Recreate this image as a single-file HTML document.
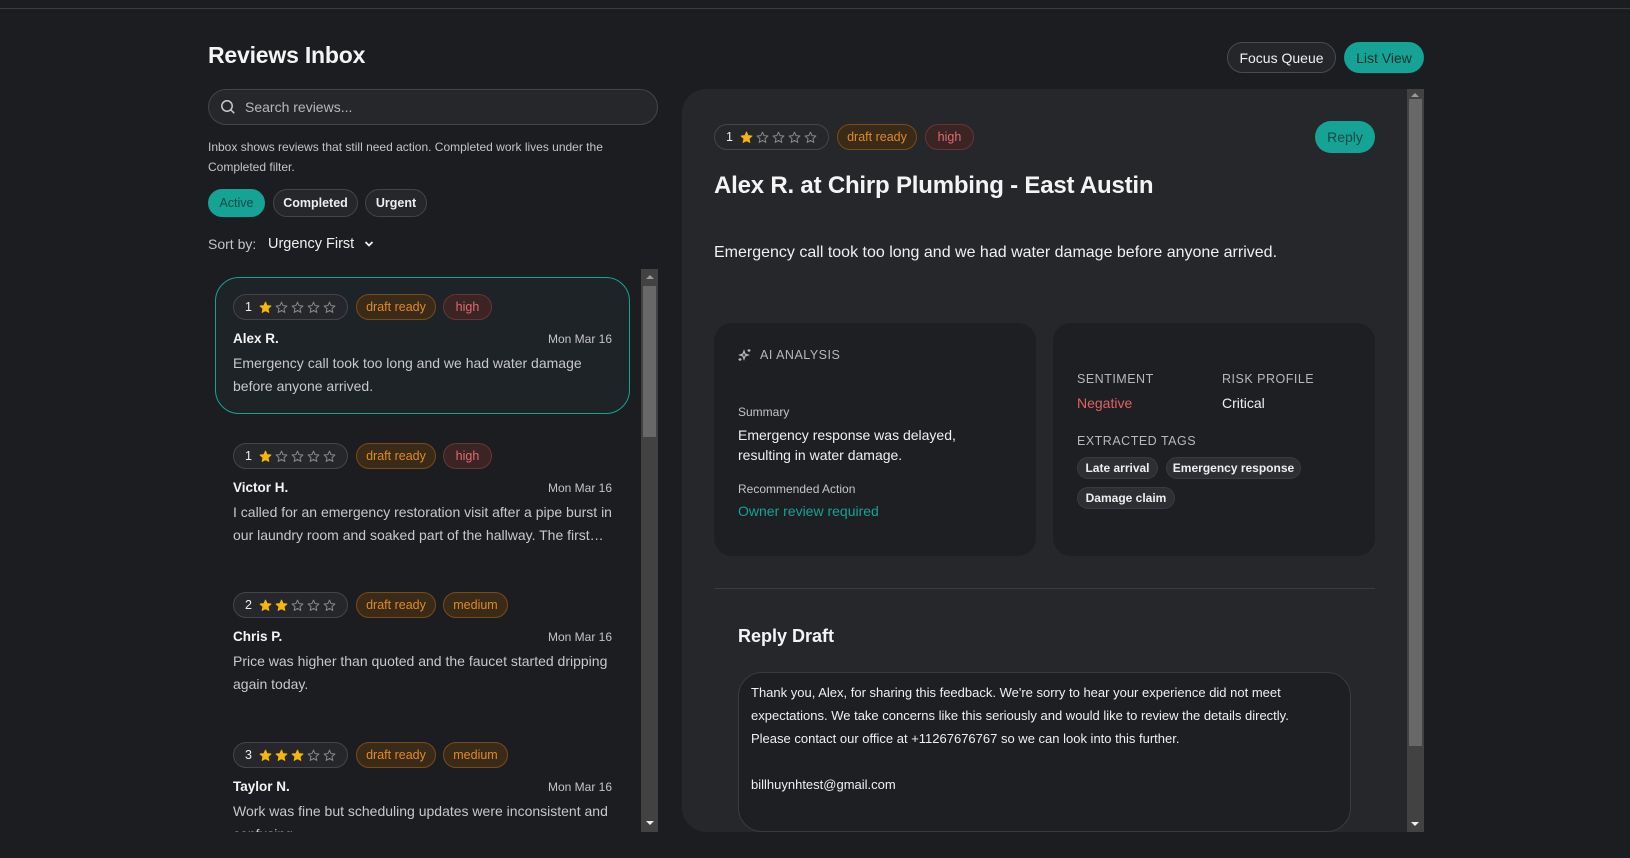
<!DOCTYPE html>
<html><head><meta charset="utf-8"><style>
*{box-sizing:border-box;margin:0;padding:0}
html,body{width:1630px;height:858px;overflow:hidden;background:#1c1d20;font-family:"Liberation Sans",Arial,sans-serif;color:#e8e8ea}
.a{position:absolute}
.topline{left:0;top:8px;width:1630px;height:1px;background:#3a3b3f}
h1{position:absolute;left:208px;top:42px;font-size:23px;font-weight:700;color:#f4f4f5;letter-spacing:-0.2px}
.btn{position:absolute;border-radius:16px;font-size:14px;display:flex;align-items:center;justify-content:center}
.search{left:208px;top:89px;width:450px;height:36px;border:1px solid #44454a;border-radius:18px;background:#26272b;font-size:14px;color:#b8b8bc;padding-left:36px;line-height:34px}
.help{left:208px;top:137px;width:420px;font-size:12px;line-height:20px;color:#c4c4c8}
.chip{position:absolute;top:189px;height:28px;border-radius:14px;font-size:12.5px;display:flex;align-items:center;justify-content:center;border:1px solid #44454a;background:#26272b;color:#eee;font-weight:700}
.pill{position:absolute;height:26px;border-radius:13px;font-size:12.5px;display:flex;align-items:center}
.rate{border:1px solid #44454a;background:#26272b;padding-left:11px;color:#eee;width:115px}
.rate span{margin-right:7px}
.dr{background:#3a2a18;border:1px solid #7a4a18;color:#e08a24;width:80px;justify-content:center}
.hi{background:#3a2424;border:1px solid #6a3434;color:#e26b6b;width:49px;justify-content:center}
.med{background:#3a2a18;border:1px solid #7a4a18;color:#e08a24;width:65px;justify-content:center}
.name{font-size:13.5px;font-weight:700;color:#f4f4f5}
.date{font-size:12px;color:#c4c4c8;text-align:right;width:120px}
.txt{font-size:14px;line-height:23px;color:#c8c8cc;width:380px}
.sb{background:#424242}
.th{background:#686868}
.up{width:0;height:0;border-left:4px solid transparent;border-right:4px solid transparent;border-bottom:4px solid #9a9a9a}
.dn{width:0;height:0;border-left:4px solid transparent;border-right:4px solid transparent;border-top:4px solid #eee}
.lbl{font-size:12.5px;letter-spacing:0.5px;color:#b8b8bc}
.tag{position:absolute;height:22px;border-radius:11px;background:#2e2f33;border:1px solid #3a3b3f;font-size:12px;color:#eee;font-weight:700;display:flex;align-items:center;justify-content:center}
</style></head><body>
<div class="a topline"></div>
<h1>Reviews Inbox</h1>
<div class="btn" style="left:1227px;top:42px;width:109px;height:31px;border:1px solid #4a4b50;background:#25262a;color:#f0f0f0">Focus Queue</div>
<div class="btn" style="left:1344px;top:42px;width:80px;height:31px;background:#14a394;color:#10302c">List View</div>

<div class="a search">Search reviews...</div>
<svg class="a" style="left:220px;top:99px" width="16" height="16" viewBox="0 0 16 16"><circle cx="7" cy="7" r="5.2" fill="none" stroke="#c8c8cc" stroke-width="1.5"/><path d="M11 11l3.2 3.2" stroke="#c8c8cc" stroke-width="1.5"/></svg>
<div class="a help">Inbox shows reviews that still need action. Completed work lives under the Completed filter.</div>
<div class="chip" style="left:208px;width:57px;background:#14a394;border-color:#14a394;color:#134a44;font-weight:400">Active</div>
<div class="chip" style="left:273px;width:85px">Completed</div>
<div class="chip" style="left:365px;width:62px">Urgent</div>
<div class="a" style="left:208px;top:236px;font-size:14px;color:#c4c4c8">Sort by:</div>
<div class="a" style="left:268px;top:236px;font-size:14.5px;color:#f0f0f0">Urgency First</div>
<svg class="a" style="left:364px;top:240px" width="10" height="8" viewBox="0 0 10 8"><path d="M1.5 2l3.5 3.5L8.5 2" fill="none" stroke="#f0f0f0" stroke-width="1.8"/></svg>

<div class="a" style="left:208px;top:269px;width:434px;height:563px;overflow:hidden">
  <div class="a" style="left:7px;top:8px;width:415px;height:137px;border:1.5px solid #14a394;border-radius:24px;background:#1d2326"></div>
</div>
<div class="a sb" style="left:641px;top:269px;width:17px;height:563px"></div>
<div class="a th" style="left:643px;top:286px;width:13px;height:151px"></div>
<div class="a up" style="left:646px;top:275px"></div>
<div class="a dn" style="left:646px;top:821px"></div>

<div id="list"></div>

<div class="a" style="left:682px;top:89px;width:742px;height:743px;background:#26272b;border-radius:24px 0 0 24px"></div>
<div class="a sb" style="left:1407px;top:89px;width:17px;height:743px"></div>
<div class="a th" style="left:1409px;top:99px;width:13px;height:647px"></div>
<div class="a up" style="left:1411px;top:93px"></div>
<div class="a dn" style="left:1411px;top:822px"></div>

<div id="det"></div>
<div class="btn" style="left:1315px;top:121px;width:60px;height:32px;background:#14a394;color:#134a44">Reply</div>
<div class="a" style="left:714px;top:172px;font-size:24px;font-weight:700;color:#f4f4f5;letter-spacing:-0.2px">Alex R. at Chirp Plumbing - East Austin</div>
<div class="a" style="left:714px;top:244px;font-size:16px;color:#f0f0f0">Emergency call took too long and we had water damage before anyone arrived.</div>

<div class="a" style="left:714px;top:323px;width:322px;height:233px;background:#1e1f23;border-radius:18px"></div>
<div class="a" style="left:1053px;top:323px;width:322px;height:233px;background:#1e1f23;border-radius:18px"></div>
<svg class="a" style="left:738px;top:348px" width="14" height="14" viewBox="0 0 14 14" fill="none" stroke="#b8b8bc" stroke-width="1.2"><path d="M6 3l1 3 3 1-3 1-1 3-1-3-3-1 3-1z"/><path d="M11 1v3M9.5 2.5h3"/><path d="M2 10v3M.5 11.5h3"/></svg>
<div class="a lbl" style="left:760px;top:348px">AI ANALYSIS</div>
<div class="a" style="left:738px;top:405px;font-size:12px;color:#c4c4c8">Summary</div>
<div class="a" style="left:738px;top:425px;font-size:14px;line-height:20px;color:#f0f0f0;width:260px">Emergency response was delayed, resulting in water damage.</div>
<div class="a" style="left:738px;top:482px;font-size:12px;color:#c4c4c8">Recommended Action</div>
<div class="a" style="left:738px;top:503px;font-size:14px;color:#14a394">Owner review required</div>

<div class="a lbl" style="left:1077px;top:372px">SENTIMENT</div>
<div class="a lbl" style="left:1222px;top:372px">RISK PROFILE</div>
<div class="a" style="left:1077px;top:395px;font-size:14px;color:#e06262">Negative</div>
<div class="a" style="left:1222px;top:395px;font-size:14px;color:#f0f0f0">Critical</div>
<div class="a lbl" style="left:1077px;top:434px">EXTRACTED TAGS</div>
<div class="tag" style="left:1077px;top:457px;width:81px">Late arrival</div>
<div class="tag" style="left:1166px;top:457px;width:135px">Emergency response</div>
<div class="tag" style="left:1077px;top:487px;width:98px">Damage claim</div>

<div class="a" style="left:714px;top:588px;width:661px;height:1px;background:#3a3b3f"></div>
<div class="a" style="left:738px;top:626px;font-size:18px;font-weight:700;color:#f4f4f5">Reply Draft</div>
<div class="a" style="left:738px;top:672px;width:613px;height:160px;background:#1e1f23;border:1px solid #3a3b3f;border-radius:24px"></div>
<div class="a" style="left:751px;top:681px;width:575px;font-size:13px;line-height:23px;color:#f0f0f0">Thank you, Alex, for sharing this feedback. We're sorry to hear your experience did not meet expectations. We take concerns like this seriously and would like to review the details directly. Please contact our office at +11267676767 so we can look into this further.<br><br>billhuynhtest@gmail.com</div>

<script>
function star(f){return '<svg width="13" height="13" viewBox="0 0 24 24" style="margin-right:3px"><path d="M12 2l2.9 6.6 7.1.7-5.4 4.8 1.6 7-6.2-3.7-6.2 3.7 1.6-7L2 9.3l7.1-.7z" fill="'+(f?'#f5b50a':'none')+'" stroke="'+(f?'#f5b50a':'#8a8a8e')+'" stroke-width="1.8" stroke-linejoin="round"/></svg>';}
function rate(n,x,y){var s='<div class="pill rate" style="left:'+x+'px;top:'+y+'px"><span>'+n+'</span>';for(var i=0;i<5;i++)s+=star(i<n);return s+'</div>';}
var items=[
 [1,'high','Alex R.','Emergency call took too long and we had water damage before anyone arrived.',294],
 [1,'high','Victor H.','I called for an emergency restoration visit after a pipe burst in our laundry room and soaked part of the hallway. The first\u2026',443],
 [2,'medium','Chris P.','Price was higher than quoted and the faucet started dripping again today.',592],
 [3,'medium','Taylor N.','Work was fine but scheduling updates were inconsistent and confusing.',742]
];
var h='<div class="a" style="left:0;top:0;width:641px;height:832px;overflow:hidden">';
items.forEach(function(it){var y=it[4];
 h+=rate(it[0],233,y);
 h+='<div class="pill dr" style="left:356px;top:'+y+'px">draft ready</div>';
 h+= it[1]=='high'?'<div class="pill hi" style="left:443px;top:'+y+'px">high</div>':'<div class="pill med" style="left:443px;top:'+y+'px">medium</div>';
 h+='<div class="a name" style="left:233px;top:'+(y+37)+'px">'+it[2]+'</div>';
 h+='<div class="a date" style="left:492px;top:'+(y+38)+'px">Mon Mar 16</div>';
 h+='<div class="a txt" style="left:233px;top:'+(y+58)+'px">'+it[3]+'</div>';
});
h+='</div>';
document.getElementById('list').outerHTML=h;
var d=rate(1,714,124)+'<div class="pill dr" style="left:837px;top:124px">draft ready</div><div class="pill hi" style="left:925px;top:124px">high</div>';
document.getElementById('det').outerHTML=d;
</script>
</body></html>
